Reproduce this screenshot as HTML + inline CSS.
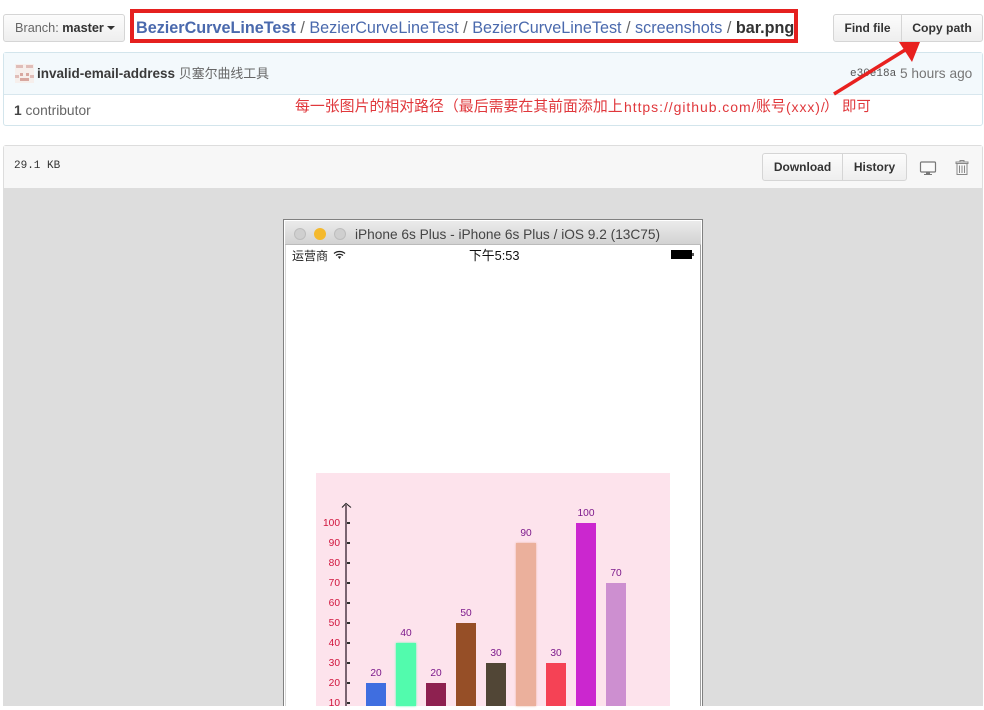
<!DOCTYPE html>
<html><head><meta charset="utf-8">
<style>
html,body{margin:0;padding:0;background:#fff}
body{width:984px;height:706px;position:relative;overflow:hidden;font-family:"Liberation Sans","Noto Sans CJK SC",sans-serif;color:#333}
.a{position:absolute;white-space:nowrap}
.btn{position:absolute;box-sizing:border-box;height:28px;border:1px solid #d5d5d5;background:linear-gradient(#fcfcfc,#eee);font-size:12px;font-weight:bold;line-height:26px;text-align:center;color:#333}
.crumb{font-size:16.2px;line-height:20px;color:#4a69ad}
.bar{position:absolute;width:20px;bottom:0}
.yl{position:absolute;left:316px;width:24px;text-align:right;font-size:10.2px;line-height:12px;color:#d0143c}
.tk{position:absolute;left:347px;width:3px;height:2px;background:#333}
.vl{position:absolute;width:40px;text-align:center;font-size:10.2px;line-height:12px;color:#7d1a8c}
</style></head>
<body>
<!-- Branch -->
<div class="btn" style="left:3px;top:14px;width:122px;border-radius:3px;font-weight:normal;color:#666;text-align:left;padding-left:11px;font-size:12.7px">Branch: <b style="color:#333">master</b> <span style="display:inline-block;width:0;height:0;border:4px solid transparent;border-top-color:#333;border-bottom:0;vertical-align:2px"></span></div>

<!-- Breadcrumb -->
<div class="a" style="left:130px;top:9px;width:668px;height:34px;box-sizing:border-box;border:4px solid #e5201f"></div>
<div class="a crumb" style="left:136px;top:18px"><b>BezierCurveLineTest</b><span style="color:#666"> / </span>BezierCurveLineTest<span style="color:#666"> / </span>BezierCurveLineTest<span style="color:#666"> / </span>screenshots<span style="color:#666"> / </span><b style="color:#333">bar.png</b></div>

<!-- Find/Copy -->
<div class="btn" style="left:833px;top:14px;width:69px;border-radius:3px 0 0 3px">Find file</div>
<div class="btn" style="left:901px;top:14px;width:82px;border-radius:0 3px 3px 0;font-size:12.2px">Copy path</div>

<!-- Commit box -->
<div class="a" style="left:3px;top:52px;width:980px;height:74px;box-sizing:border-box;border:1px solid #d3e5ec;border-radius:3px;background:#fff"></div>
<div class="a" style="left:4px;top:53px;width:978px;height:41px;background:#f3f9fc;border-bottom:1px solid #d8e7ee"></div>
<svg class="a" style="left:15px;top:64px" width="19" height="19" viewBox="0 0 19 19">
<rect width="19" height="19" fill="#f6efec"/>
<rect x="1" y="1" width="7" height="3" fill="#e0bdb8"/><rect x="11" y="1" width="7" height="3" fill="#e0bdb8"/>
<rect x="0" y="11" width="4" height="3" fill="#e0bdb8"/><rect x="15" y="11" width="4" height="3" fill="#e0bdb8"/>
<rect x="5" y="9" width="3" height="3" fill="#d8a8a0"/><rect x="11" y="9" width="3" height="3" fill="#d8a8a0"/>
<rect x="5" y="14" width="9" height="3" fill="#d8a8a0"/>
</svg>
<div class="a" style="left:37px;top:66px;font-size:13.5px;line-height:15px;font-weight:bold;color:#3a3a3a">invalid-email-address <span style="font-weight:normal;color:#666;font-size:12.9px">贝塞尔曲线工具</span></div>
<div class="a" style="left:850px;top:67px;font-size:11px;line-height:14px;font-family:'Liberation Mono',monospace;color:#555">e30e18a</div>
<div class="a" style="left:900px;top:66px;font-size:13.7px;line-height:15px;color:#767676">5 hours ago</div>
<div class="a" style="left:14px;top:103px;font-size:13.8px;line-height:15px;color:#666"><b style="color:#444">1</b> contributor</div>

<!-- Red annotation -->
<div class="a" style="left:295px;top:98px;font-size:14.9px;line-height:18px;color:#e0383c">每一张图片的相对路径（最后需要在其前面添加上</div>
<div class="a" style="left:624px;top:98px;font-size:14px;line-height:18px;letter-spacing:.95px;color:#e0383c">https://github.com/</div>
<div class="a" style="left:756px;top:98px;font-size:14.9px;line-height:18px;color:#e0383c">账号</div>
<div class="a" style="left:786px;top:98px;font-size:14px;line-height:18px;letter-spacing:.9px;color:#e0383c">(xxx)/</div>
<div class="a" style="left:824px;top:98px;font-size:14.9px;line-height:18px;color:#e0383c">）</div>
<div class="a" style="left:842px;top:98px;font-size:14.4px;line-height:18px;color:#e0383c">即可</div>
<svg class="a" style="left:825px;top:35px" width="100" height="65" viewBox="0 0 100 65">
<path d="M9 59 L80 15" stroke="#e8211f" stroke-width="3.5" fill="none"/>
<path d="M74 7 L95 7 L87 27 Z" fill="#e8211f"/>
</svg>

<!-- File box -->
<div class="a" style="left:3px;top:145px;width:980px;height:561px;box-sizing:border-box;border:1px solid #ddd;border-bottom:0;border-radius:3px 3px 0 0;background:#ddd"></div>
<div class="a" style="left:4px;top:146px;width:978px;height:42px;background:#f7f7f7"></div>
<div class="a" style="left:14px;top:160px;font-family:'Liberation Mono',monospace;font-size:11px;line-height:13px;color:#333">29.1 KB</div>
<div class="btn" style="left:762px;top:153px;width:81px;border-radius:3px 0 0 3px">Download</div>
<div class="btn" style="left:842px;top:153px;width:65px;border-radius:0 3px 3px 0">History</div>
<svg class="a" style="left:919px;top:160px" width="18" height="16" viewBox="0 0 18 16">
<rect x="1.5" y="2" width="15" height="10" rx="1" fill="#fafafa" stroke="#777" stroke-width="1.2"/>
<rect x="7" y="12" width="4" height="2" fill="#777"/><rect x="5" y="14" width="8" height="1" fill="#777"/>
</svg>
<svg class="a" style="left:954px;top:159px" width="16" height="17" viewBox="0 0 16 17">
<path d="M6 2.5V1.5H10V2.5M2 3H14V4.5H2Z" fill="none" stroke="#888" stroke-width="1"/>
<path d="M3 5V15.5H13V5" fill="none" stroke="#888" stroke-width="1"/>
<path d="M5.5 6.5V14M8 6.5V14M10.5 6.5V14" stroke="#888" stroke-width="1"/>
</svg>

<!-- Simulator window -->
<div class="a" style="left:283px;top:219px;width:420px;height:487px;box-sizing:border-box;border:1px solid #808080;border-bottom:0;background:#fff"></div>
<div class="a" style="left:285px;top:221px;width:1px;height:485px;background:#d8d8d8"></div>
<div class="a" style="left:700px;top:221px;width:1px;height:485px;background:#a0a0a0"></div>
<div class="a" style="left:285px;top:221px;width:416px;height:24px;background:linear-gradient(#ebebeb,#d2d2d2);border-bottom:1px solid #bbb;box-sizing:border-box"></div>
<div class="a" style="left:294px;top:228px;width:12px;height:12px;border-radius:50%;background:#cfcfcf;border:1px solid #bdbdbd;box-sizing:border-box"></div>
<div class="a" style="left:314px;top:228px;width:12px;height:12px;border-radius:50%;background:#f4b92d"></div>
<div class="a" style="left:334px;top:228px;width:12px;height:12px;border-radius:50%;background:#cfcfcf;border:1px solid #bdbdbd;box-sizing:border-box"></div>
<div class="a" style="left:355px;top:227px;font-size:13.7px;line-height:15px;color:#444">iPhone 6s Plus - iPhone 6s Plus / iOS 9.2 (13C75)</div>
<div class="a" style="left:292px;top:249px;font-size:12px;line-height:14px;color:#222">运营商</div>
<svg class="a" style="left:333px;top:250px" width="13" height="10" viewBox="0 0 13 10">
<path d="M1 3.5C4 .8 9 .8 12 3.5M3 5.5C5 3.8 8 3.8 10 5.5" fill="none" stroke="#222" stroke-width="1.2"/>
<path d="M4.8 6.8L6.5 9L8.2 6.8C7.2 6 5.8 6 4.8 6.8Z" fill="#222"/>
</svg>
<div class="a" style="left:469px;top:248px;font-size:12.8px;line-height:15px;color:#111">下午5:53</div>
<div class="a" style="left:671px;top:250px;width:21px;height:9px;background:#000"></div>
<div class="a" style="left:692px;top:253px;width:2px;height:3px;background:#555"></div>

<!-- Chart -->
<div class="a" style="left:316px;top:473px;width:354px;height:233px;background:#fde3ec"></div>
<div class="a" style="left:345px;top:505px;width:2px;height:201px;background:#7a6470"></div>
<svg class="a" style="left:340px;top:502px" width="12" height="7" viewBox="0 0 12 7"><path d="M2 5.5L6 1.5L11 5.5" fill="none" stroke="#222" stroke-width="1.1"/></svg>

<div class="yl" style="top:518px">100</div><div class="tk" style="top:522px"></div>
<div class="yl" style="top:538px">90</div><div class="tk" style="top:542px"></div>
<div class="yl" style="top:558px">80</div><div class="tk" style="top:562px"></div>
<div class="yl" style="top:578px">70</div><div class="tk" style="top:582px"></div>
<div class="yl" style="top:598px">60</div><div class="tk" style="top:602px"></div>
<div class="yl" style="top:618px">50</div><div class="tk" style="top:622px"></div>
<div class="yl" style="top:638px">40</div><div class="tk" style="top:642px"></div>
<div class="yl" style="top:658px">30</div><div class="tk" style="top:662px"></div>
<div class="yl" style="top:678px">20</div><div class="tk" style="top:682px"></div>
<div class="yl" style="top:698px">10</div><div class="tk" style="top:702px"></div>

<div class="bar" style="left:366px;top:683px;background:#3f6ee0"></div>
<div class="bar" style="left:396px;top:643px;background:#52fbad;box-shadow:0 0 2px #52fbad"></div>
<div class="bar" style="left:426px;top:683px;background:#8e2150"></div>
<div class="bar" style="left:456px;top:623px;background:#964f27"></div>
<div class="bar" style="left:486px;top:663px;background:#514636"></div>
<div class="bar" style="left:516px;top:543px;background:#ebb09c;box-shadow:0 0 2px #ebb09c"></div>
<div class="bar" style="left:546px;top:663px;background:#f54255"></div>
<div class="bar" style="left:576px;top:523px;background:#cb27cf"></div>
<div class="bar" style="left:606px;top:583px;background:#cd8fd0"></div>

<div class="vl" style="left:356px;top:668px">20</div>
<div class="vl" style="left:386px;top:628px">40</div>
<div class="vl" style="left:416px;top:668px">20</div>
<div class="vl" style="left:446px;top:608px">50</div>
<div class="vl" style="left:476px;top:648px">30</div>
<div class="vl" style="left:506px;top:528px">90</div>
<div class="vl" style="left:536px;top:648px">30</div>
<div class="vl" style="left:566px;top:508px">100</div>
<div class="vl" style="left:596px;top:568px">70</div>
</body></html>
